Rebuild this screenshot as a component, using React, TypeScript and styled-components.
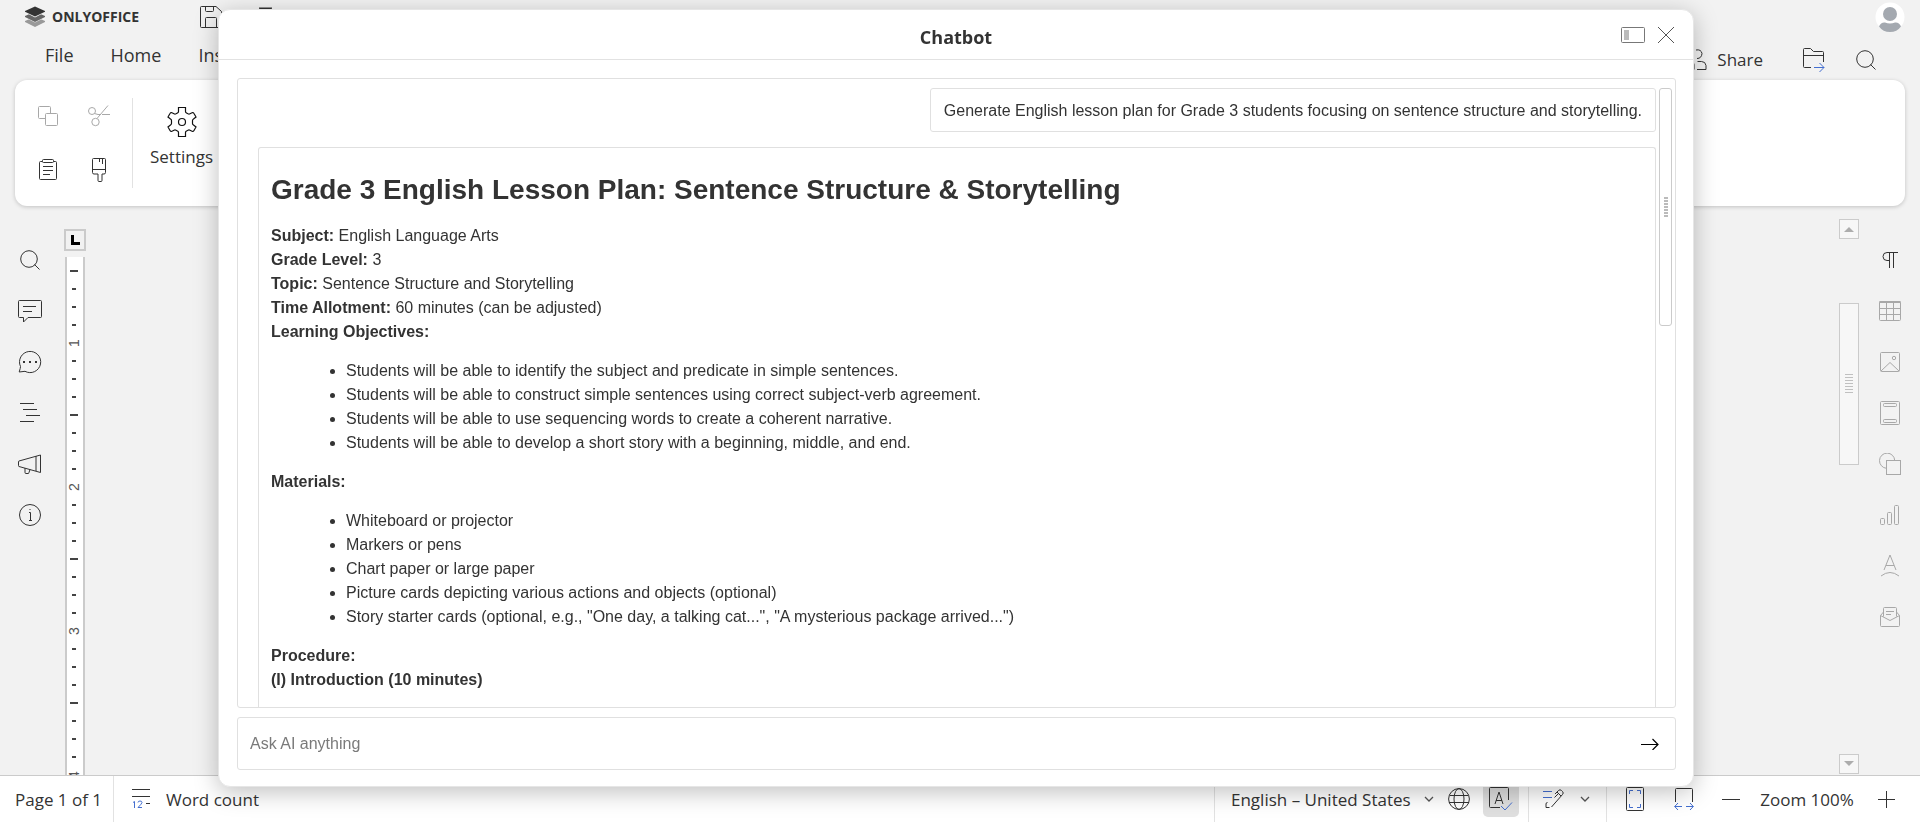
import React from "react";
import styled, { createGlobalStyle } from "styled-components";

const UI_FONT = '"Segoe UI", "Open Sans", "Noto Sans", sans-serif';
const CHAT_FONT = 'Arial, "Liberation Sans", sans-serif';

const GlobalStyle = createGlobalStyle`
  *, *::before, *::after { box-sizing: border-box; }
  body { margin: 0; background: #f2f2f2; color: #333; font-family: ${UI_FONT}; }
  button, input, select { font: inherit; color: inherit; }
  ul { list-style: none; margin: 0; padding: 0; }
`;

const Shell = styled.div`
  display: flex;
  flex-direction: column;
  height: 100vh;
  min-height: 600px;
  overflow: hidden;
  background: #f2f2f2;
`;

const Svg = styled.svg<{ $tone?: string }>`
  display: block;
  flex: none;
  fill: none;
  stroke: ${(p) => p.$tone ?? "#333"};
  stroke-width: 1;
`;

function Icon({ w, h, tone, children }: { w: number; h: number; tone?: string; children: React.ReactNode }) {
  return (
    <Svg width={w} height={h} viewBox={`0 0 ${w} ${h}`} $tone={tone} aria-hidden="true">
      {children}
    </Svg>
  );
}

const IconButton = styled.button<{ $w?: number; $h?: number }>`
  display: flex;
  align-items: center;
  justify-content: center;
  flex: none;
  width: ${(p) => p.$w ?? 30}px;
  height: ${(p) => p.$h ?? 30}px;
  padding: 0;
  border: 0;
  background: transparent;
`;

/* Header */
const Header = styled.header`
  display: flex;
  justify-content: space-between;
  flex: none;
  height: 80px;
`;
const HeaderLeft = styled.div`
  display: flex;
  flex-direction: column;
`;
const TitleRow = styled.div`
  display: flex;
  align-items: center;
  height: 34px;
  padding-left: 25px;
`;
const Brand = styled.span`
  width: 148px;
  margin-left: 7px;
  font-size: 14px;
  font-weight: 700;
  line-height: 20px;
`;
const QuickActions = styled.div`
  display: flex;
  gap: 16px;
`;
const Tabs = styled.nav`
  display: flex;
  gap: 37px;
  padding-left: 45px;
`;
const Tab = styled.button`
  padding: 0;
  border: 0;
  background: transparent;
  font-size: 18px;
  line-height: 42px;
`;
const HeaderRight = styled.div`
  display: flex;
  flex-direction: column;
  align-items: flex-end;
  padding: 2px 15px 0 0;
`;
const HeaderActions = styled.div`
  display: flex;
  align-items: center;
  margin: 13px 8px 0 0;
`;
const ShareButton = styled.button`
  display: flex;
  align-items: center;
  gap: 10px;
  margin-right: 30px;
  padding: 0;
  border: 0;
  background: transparent;
  font-size: 17px;
  line-height: 30px;
`;

/* Ribbon */
const Ribbon = styled.section`
  display: flex;
  flex: none;
  align-items: center;
  height: 126px;
  margin: 0 15px;
  padding-left: 17px;
  border-radius: 12px;
  background: #fff;
  box-shadow: 0 1px 4px rgba(0, 0, 0, 0.2);
`;
const ClipboardGroup = styled.div`
  display: grid;
  grid-template-columns: 32px 32px;
  grid-template-rows: 30px 30px;
  gap: 24px 19px;
`;
const RibbonDivider = styled.div`
  width: 1px;
  height: 90px;
  margin: 0 17px;
  background: #e2e2e2;
`;
const LargeButton = styled.button`
  display: flex;
  flex-direction: column;
  align-items: center;
  gap: 7px;
  padding: 0 0 10px;
  border: 0;
  background: transparent;
  font-size: 17px;
  line-height: 26px;
`;

/* Work area */
const WorkArea = styled.main`
  display: flex;
  flex: 1;
  min-height: 0;
`;
const SideBar = styled.aside<{ $width: number }>`
  display: flex;
  flex: none;
  flex-direction: column;
  align-items: center;
  gap: 21px;
  width: ${(p) => p.$width}px;
  padding-top: 39px;
`;
const RulerColumn = styled.div`
  display: flex;
  flex: none;
  flex-direction: column;
  align-items: center;
  gap: 6px;
  width: 30px;
  padding-top: 23px;
`;
const TabStop = styled.button`
  display: flex;
  align-items: center;
  justify-content: center;
  flex: none;
  width: 22px;
  height: 22px;
  padding: 0;
  border: 2px solid #cbcbcb;
  background: #f2f2f2;
`;
const Ruler = styled.div`
  display: flex;
  flex: 1;
  flex-direction: column;
  align-items: center;
  width: 20px;
  min-height: 0;
  overflow: hidden;
  padding: 5px 2px 0 0;
  border: solid #cbcbcb;
  border-width: 0 2px;
  background: #fff;
`;
const Tick = styled.div<{ $long?: boolean }>`
  display: flex;
  align-items: center;
  flex: none;
  height: 18px;
  &::before {
    content: "";
    width: ${(p) => (p.$long ? 8 : 4)}px;
    height: 2px;
    background: #444;
  }
`;
const TickNumber = styled.span`
  flex: none;
  height: 18px;
  font: 14px/18px ${CHAT_FONT};
  color: #555;
  transform: rotate(-90deg);
`;
const Canvas = styled.div`
  flex: 1;
`;
const PageScroll = styled.div`
  display: flex;
  flex: none;
  flex-direction: column;
  width: 20px;
  padding: 13px 0 1px;
`;
const ScrollButton = styled(IconButton)`
  width: 20px;
  height: 20px;
  border: 1px solid #cbcbcb;
  background: #f7f7f7;
`;
const PageThumb = styled.div`
  display: flex;
  align-items: center;
  justify-content: center;
  height: 162px;
  margin: 64px 0 auto;
  border: 1px solid #cbcbcb;
  background: #f7f7f7;
`;

/* Status bar */
const StatusBar = styled.footer`
  display: flex;
  flex: none;
  align-items: center;
  justify-content: space-between;
  height: 47px;
  border-top: 1px solid #cbcbcb;
  background: #fff;
  font-size: 17px;
`;
const StatusGroup = styled.div`
  display: flex;
  align-items: center;
  height: 100%;
`;
const StatusTools = styled(StatusGroup)`
  padding-right: 12px;
`;
const StatusText = styled.button`
  display: flex;
  align-items: center;
  gap: 15px;
  padding: 0;
  border: 0;
  background: transparent;
  white-space: nowrap;
`;
const PageCount = styled(StatusText)`
  width: 113px;
  padding-left: 15px;
`;
const StatusDivider = styled.div<{ $before?: number }>`
  width: 1px;
  height: 100%;
  margin-left: ${(p) => p.$before ?? 0}px;
  background: #e2e2e2;
`;
const WordCount = styled(StatusText)`
  padding-left: 18px;
`;
const LanguageSelect = styled.select`
  width: 182px;
  margin: 0 3px 0 16px;
  padding: 0;
  border: 0;
  background: transparent;
  appearance: none;
`;
const SpellButton = styled(IconButton)`
  width: 36px;
  height: 36px;
  margin: 0 9px 0 7px;
  border-radius: 5px;
  background: #dfdfdf;
`;
const ZoomLabel = styled.span`
  width: 98px;
  margin: 0 10px 0 1px;
  text-align: center;
  white-space: nowrap;
`;

/* Dialog */
const Overlay = styled.div`
  position: fixed;
  inset: 0;
  display: flex;
  padding: 9px 226px 35px 218px;
`;
const Dialog = styled.section`
  display: flex;
  flex: 1;
  flex-direction: column;
  min-width: 0;
  border: 1px solid #e6e6e6;
  border-radius: 12px;
  background: #fff;
  box-shadow: 0 5px 25px rgba(0, 0, 0, 0.25);
`;
const DialogHeader = styled.header`
  display: grid;
  grid-template-columns: 1fr auto 1fr;
  align-items: center;
  flex: none;
  height: 50px;
  padding: 0 12px;
  border-bottom: 1px solid #e2e2e2;
`;
const DialogTitle = styled.h2`
  grid-column: 2;
  margin: 4px 0 0;
  font-size: 18px;
  font-weight: 700;
  line-height: 26px;
`;
const DialogTools = styled.div`
  display: flex;
  justify-content: flex-end;
  gap: 2px;
`;
const DialogBody = styled.div`
  display: flex;
  flex: 1;
  flex-direction: column;
  gap: 9px;
  min-height: 0;
  padding: 18px 17px 16px 18px;
  font-family: ${CHAT_FONT};
  font-size: 16px;
  line-height: 24px;
`;
const ChatLog = styled.div`
  display: flex;
  flex: 1;
  gap: 3px;
  min-height: 0;
  overflow: hidden;
  padding: 9px 3px 0 20px;
  border: 1px solid #e0e0e0;
  border-radius: 3px;
`;
const Messages = styled.div`
  display: flex;
  flex: 1;
  flex-direction: column;
  gap: 15px;
  min-width: 0;
`;
const UserMessage = styled.p`
  align-self: flex-end;
  margin: 0;
  padding: 10px 13px 8px;
  border: 1px solid #e0e0e0;
  border-radius: 3px;
`;
const BotMessage = styled.article`
  flex: 1 0 auto;
  padding: 25px 12px 0;
  border: 1px solid #e0e0e0;
  border-bottom: 0;
  border-radius: 3px 3px 0 0;
`;
const PlanTitle = styled.h1`
  margin: 0 0 17px;
  font-size: 28px;
  font-weight: 700;
  line-height: 34px;
`;
const Line = styled.p`
  margin: 0;
`;
const Bullets = styled.ul`
  margin: 15px 0;
  padding-left: 75px;
  list-style: disc;
`;
const ChatThumb = styled.div`
  display: flex;
  align-items: center;
  justify-content: center;
  flex: none;
  width: 13px;
  height: 238px;
  border: 1px solid #cbcbcb;
  border-radius: 3px;
`;
const Composer = styled.form`
  display: flex;
  align-items: center;
  flex: none;
  height: 53px;
  padding: 0 10px 0 12px;
  border: 1px solid #e0e0e0;
  border-radius: 3px;
`;
const Prompt = styled.input`
  flex: 1;
  padding: 0;
  border: 0;
  outline: 0;
  background: transparent;
  &::placeholder { color: #7a7a7a; opacity: 1; }
`;

const BLUE = "#446fd0";
const PALE = "#a8a8a8";

const Magnifier = () => (
  <Icon w={20} h={20}>
    <circle cx="9" cy="9" r="8.3" />
    <path d="M14.5 14.5l5 5" />
  </Icon>
);
const Chevron = () => (
  <Icon w={10} h={7} tone="#555"><path d="M1 1l4 4 4-4" strokeWidth="1.3" /></Icon>
);

const objectives = [
  "Students will be able to identify the subject and predicate in simple sentences.",
  "Students will be able to construct simple sentences using correct subject-verb agreement.",
  "Students will be able to use sequencing words to create a coherent narrative.",
  "Students will be able to develop a short story with a beginning, middle, and end.",
];
const materials = [
  "Whiteboard or projector",
  "Markers or pens",
  "Chart paper or large paper",
  "Picture cards depicting various actions and objects (optional)",
  'Story starter cards (optional, e.g., "One day, a talking cat...", "A mysterious package arrived...")',
];
const details: [string, string][] = [
  ["Subject:", "English Language Arts"],
  ["Grade Level:", "3"],
  ["Topic:", "Sentence Structure and Storytelling"],
  ["Time Allotment:", "60 minutes (can be adjusted)"],
];

const leftTools: [string, React.ReactNode][] = [
  ["Search", <Magnifier />],
  ["Comments", (
    <Icon w={24} h={24}>
      <path d="M1.5 1.5h21a1 1 0 0 1 1 1v15a1 1 0 0 1-1 1H10l-4.500 4.500v-4.500h-4a1 1 0 0 1-1-1v-15a1 1 0 0 1 1-1zM5 7.500h13M5 12.500h9" />
    </Icon>
  )],
  ["Chat", (
    <Icon w={24} h={24}>
      <path d="M2.500 16.500A10.600 10.600 0 1 1 7 21.300L1.200 22l1-3.500z" />
      <path d="M5 12h2M11 12h2M17 12h2" strokeWidth="2" />
    </Icon>
  )],
  ["Headings", <Icon w={22} h={20}><path d="M1 .5h14M4 6.500h14M7 12.500h14M1 18.500h14" /></Icon>],
  ["Feedback", (
    <Icon w={24} h={20}>
      <path d="M1 7L22.500 1v17.500L1 12.500q-.5 0-.5-1v-3.500q0-1 .5-1zM18 2v15M7 14v4.500q0 1 1 1h2q1 0 1-1l1-3" />
    </Icon>
  )],
  ["About", (
    <Icon w={24} h={24}>
      <circle cx="12" cy="12" r="10.500" />
      <path d="M11 9.500h1.500v7.500M11 17.500h3M11.500 6.500h1" />
    </Icon>
  )],
];

const rightTools: [string, React.ReactNode][] = [
  ["Paragraph settings", <Icon w={18} h={18}><path d="M17 1.500H6a4 4 0 0 0 0 8h2M8.500 1.500V17M12.500 1.500V17" /></Icon>],
  ["Table settings", (
    <Icon w={22} h={22} tone={PALE}>
      <rect x=".5" y="1.500" width="21" height="19" rx="1" />
      <path d="M.5 2h21" strokeWidth="2" />
      <path d="M1 8.500h20M1 14.500h20M7.500 3v18M14.500 3v18" />
    </Icon>
  )],
  ["Image settings", (
    <Icon w={20} h={20} tone={PALE}>
      <rect x=".5" y=".5" width="19" height="19" rx="1" />
      <circle cx="14" cy="6" r="1.700" />
      <path d="M1 19l9-8.500L19 19" />
    </Icon>
  )],
  ["Header settings", (
    <Icon w={20} h={24} tone={PALE}>
      <rect x=".5" y=".5" width="19" height="23" rx="1" />
      <rect x="3.500" y="2.500" width="13" height="3" rx="1" />
      <rect x="3.500" y="18.500" width="13" height="3" rx="1" />
    </Icon>
  )],
  ["Shape settings", (
    <Icon w={22} h={22} tone={PALE}>
      <path d="M7.500 15.300A7.600 7.600 0 1 1 15.700 7.500" />
      <rect x="7.500" y="7.500" width="14" height="14" />
    </Icon>
  )],
  ["Chart settings", (
    <Icon w={20} h={20} tone={PALE}>
      <rect x=".5" y="13.500" width="4" height="6" rx="1" />
      <rect x="7.500" y="7.500" width="4" height="12" rx="1" />
      <rect x="14.500" y=".5" width="4" height="19" rx="1" />
    </Icon>
  )],
  ["Text art settings", (
    <Icon w={20} h={24} tone={PALE}>
      <path d="M4 16L10 1l6 15M6 11.500h8M1 22q9-7 18 0" />
    </Icon>
  )],
  ["Mail merge settings", (
    <Icon w={20} h={20} tone={PALE}>
      <path d="M3.500 5L.5 8.500v10q0 1 1 1h17q1 0 1-1v-10L16.500 5M.5 8.500L10 13.500l9.500-5M3.500 9.500V1.500q0-1 1-1h11q1 0 1 1v8M6 4.500h8M6 7.500h5" />
    </Icon>
  )],
];

function RulerMarks() {
  return (
    <>
      {[1, 2, 3, 4].map((n) => (
        <React.Fragment key={n}>
          <Tick $long /><Tick /><Tick /><Tick />
          <TickNumber>{n}</TickNumber>
          <Tick /><Tick /><Tick />
        </React.Fragment>
      ))}
    </>
  );
}

function TopBar() {
  return (
    <Header>
      <HeaderLeft>
        <TitleRow>
          <Icon w={20} h={22} tone="none">
            <path d="M0 15l10-4.500L20 15v1l-10 5-10-5z" fill="#999" />
            <path d="M0 10.500L10 6l10 4.500v1L10 16.500 0 11.500z" fill="#f2f2f2" />
            <path d="M0 10l10-4.500L20 10v1L10 16 0 11z" fill="#666" />
            <path d="M0 5.500L10 1l10 4.500v.8L10 11.500 0 6.300z" fill="#f2f2f2" />
            <path d="M0 5L10 .5 20 5v.8L10 10.500 0 5.800z" fill="#333" />
          </Icon>
          <Brand>ONLYOFFICE</Brand>
          <QuickActions>
            <IconButton $w={22} $h={22} aria-label="Save">
              <Icon w={22} h={22}>
                <path d="M1.500.5h14.500l5.500 5v15q0 1-1 1h-19q-1 0-1-1v-19q0-1 1-1zM5.500.5v4q0 1 1 1h6q1 0 1-1v-4M5.500 21.500v-9q0-1 1-1h9q1 0 1 1v9" />
              </Icon>
            </IconButton>
            <IconButton $w={54} $h={22} aria-label="Print">
              <Icon w={22} h={22}><path d="M5.500 7V2.500h12V7M5 2h13M1.500 7.500h19v9h-19z" /></Icon>
            </IconButton>
          </QuickActions>
        </TitleRow>
        <Tabs>
          <Tab>File</Tab>
          <Tab>Home</Tab>
          <Tab>Insert</Tab>
        </Tabs>
      </HeaderLeft>
      <HeaderRight>
        <IconButton aria-label="Account">
          <Icon w={30} h={30} tone="none">
            <circle cx="15" cy="15" r="14.500" fill="#fff" />
            <circle cx="15" cy="12" r="7" fill="#a4a9b0" />
            <path d="M4 24.500q2-4.500 6-4 5 2 10 0 4-.5 6 4-4 5.500-11 5.500t-11-5.500z" fill="#a4a9b0" />
          </Icon>
        </IconButton>
        <HeaderActions>
          <ShareButton>
            <Icon w={24} h={22}>
              <circle cx="6" cy="5" r="4.500" />
              <path d="M13 1q5-1 6 3.500-.5 5-5 5M1 20.500v-5q0-3 3-3h4q3 0 3 3v5zM14.500 12.500h4q4 0 4.500 4v4h-9" />
            </Icon>
            Share
          </ShareButton>
          <IconButton $w={42} aria-label="Open file location">
            <Icon w={22} h={24}>
              <path d="M8 19.500H1.500q-1 0-1-1v-17q0-1 1-1h6l3 3h9q1 0 1 1V14M.5 7.500h20" />
              <path d="M11 19.500h10M16.500 15l4.500 4.500-4.500 4.500" stroke={BLUE} />
            </Icon>
          </IconButton>
          <IconButton $w={62} aria-label="Find"><Magnifier /></IconButton>
        </HeaderActions>
      </HeaderRight>
    </Header>
  );
}

function Toolbar() {
  return (
    <Ribbon>
      <ClipboardGroup>
        <IconButton $w={32} aria-label="Copy">
          <Icon w={20} h={20} tone={PALE}>
            <path d="M7 12.500H1.500q-1 0-1-1v-10q0-1 1-1h10q1 0 1 1V7" />
            <rect x="7.500" y="7.500" width="12" height="12" rx="1" />
          </Icon>
        </IconButton>
        <IconButton $w={32} aria-label="Cut">
          <Icon w={22} h={22} tone={PALE}>
            <circle cx="4" cy="6" r="3.500" />
            <circle cx="7.500" cy="17" r="3.700" />
            <path d="M6.500 8.500l3.500 1h3M14 9.500h8M20 .5L9 13.500" />
          </Icon>
        </IconButton>
        <IconButton $w={32} aria-label="Paste">
          <Icon w={18} h={22}>
            <path d="M3.500 2.500h-2q-1 0-1 1v16q0 1 1 1h15q1 0 1-1v-16q0-1-1-1h-2M4 7.500h10M4 11.500h10M4 15.500h7" />
            <rect x="3.500" y=".5" width="11" height="3" rx="1" />
          </Icon>
        </IconButton>
        <IconButton $w={32} aria-label="Copy style">
          <Icon w={14} h={24}>
            <path d="M.5 1.500q0-1 1-1h11q1 0 1 1v13q0 1.500-1.500 1.500h-2v6.500q0 1-1 1h-2q-1 0-1-1v-6.500H2Q.5 16 .5 14.500zM.5 11.500h13M7.500.5V4M10.500.5V6" />
          </Icon>
        </IconButton>
      </ClipboardGroup>
      <RibbonDivider />
      <LargeButton>
        <Icon w={30} h={30} tone="#111">
          <path d="M11.500.5h7v4q0 1 1 1.500l1.500.8q1 .5 2 0l2.500-1.300q1 0 1.500 1l2 3.500-2.500 2q-1 .6-1 1.500v3q0 1 1 1.500l2.500 2-2 3.500q-.5 1-1.500 1L23 23.200q-1-.5-2 0l-1.500.8q-1 .5-1 1.500v4h-7v-4q0-1-1-1.500L9 23.200q-1-.5-2 0l-2.500 1.300q-1 0-1.500-1L1 20l2.500-2q1-.6 1-1.500v-3q0-1-1-1.500L1 10l2-3.500q.5-1 1.500-1L7 6.800q1 .5 2 0l1.500-.8q1-.5 1-1.500z" strokeWidth="1.200" />
          <circle cx="15" cy="15" r="3.500" strokeWidth="1.200" />
        </Icon>
        Settings
      </LargeButton>
    </Ribbon>
  );
}

function Status() {
  return (
    <StatusBar>
      <StatusGroup>
        <PageCount>Page 1 of 1</PageCount>
        <StatusDivider />
        <WordCount>
          <Icon w={19} h={20}>
            <path d="M0 .5h18M0 7.500h18M14 14.500h4" />
            <path d="M1 13.500l1.500-1V19M6 13.500q0-1.500 2-1.500t2 1.500q0 1-4 5h4" stroke={BLUE} />
          </Icon>
          Word count
        </WordCount>
      </StatusGroup>
      <StatusTools>
        <StatusDivider />
        <LanguageSelect aria-label="Document language">
          <option>English – United States</option>
        </LanguageSelect>
        <IconButton $w={26} aria-label="Show languages"><Chevron /></IconButton>
        <IconButton $w={34} aria-label="Set document language">
          <Icon w={22} h={22}>
            <circle cx="11" cy="11" r="10.400" />
            <ellipse cx="11" cy="11" rx="5" ry="10.400" />
            <path d="M2 7.500h18M1 14.500h20" />
          </Icon>
        </IconButton>
        <SpellButton aria-label="Spell checking" aria-pressed="true">
          <Icon w={24} h={24}>
            <path d="M11 20.500H1.500q-1 0-1-1v-18q0-1 1-1h17q1 0 1 1V13M6 17l4-12 4 12M7 13.500h6" />
            <path d="M12 19l4 4 7-7.500" stroke={BLUE} />
          </Icon>
        </SpellButton>
        <StatusDivider />
        <IconButton $w={50} aria-label="Track changes">
          <Icon w={22} h={20}>
            <path d="M0 2.500h9M0 8.500h9" stroke={BLUE} />
            <path d="M6.500 18.500H3v-3.500q0-1.500 1.500-1.500M12 5L15.500 1.500q1.500-1.500 3 0l1 1q1.500 1.500 0 3L8.500 18M14 3l4 4M11.500 8.500L16 4" />
          </Icon>
        </IconButton>
        <IconButton $w={12} aria-label="Track changes options"><Chevron /></IconButton>
        <StatusDivider $before={15} />
        <IconButton $w={55} aria-label="Fit to page">
          <Icon w={18} h={24}>
            <rect x=".5" y=".5" width="17" height="23" rx="1" />
            <path d="M3.500 7V3.500H7M11 3.500h3.500V7M3.500 17v3.500H7M11 20.500h3.500V17" stroke={BLUE} />
          </Icon>
        </IconButton>
        <IconButton $w={43} aria-label="Fit to width">
          <Icon w={20} h={22}>
            <path d="M1.500 14V1.500q0-1 1-1h15q1 0 1 1V14" />
            <path d="M8 18.500H.7M4 15L.7 18.500 4 22M12 18.500h7.300M16 15l3.300 3.500L16 22" stroke={BLUE} />
          </Icon>
        </IconButton>
        <IconButton $w={52} aria-label="Zoom out"><Icon w={18} h={18}><path d="M0 9.500h18" /></Icon></IconButton>
        <ZoomLabel>Zoom 100%</ZoomLabel>
        <IconButton $w={42} aria-label="Zoom in"><Icon w={18} h={18}><path d="M0 9.500h17M8.500 1v17" /></Icon></IconButton>
      </StatusTools>
    </StatusBar>
  );
}

function Chatbot() {
  return (
    <Overlay>
      <Dialog role="dialog" aria-labelledby="chatbot-title">
        <DialogHeader>
          <DialogTitle id="chatbot-title">Chatbot</DialogTitle>
          <DialogTools>
            <IconButton $w={32} aria-label="Dock panel">
              <Icon w={24} h={16} tone="#777">
                <rect x=".5" y=".5" width="23" height="15" rx="1" />
                <path d="M3 3h5v10H3z" fill="#bbb" stroke="none" />
              </Icon>
            </IconButton>
            <IconButton aria-label="Close">
              <Icon w={16} h={16} tone="#555"><path d="M0 0l16 16M16 0L0 16" /></Icon>
            </IconButton>
          </DialogTools>
        </DialogHeader>
        <DialogBody>
          <ChatLog>
            <Messages>
              <UserMessage>
                Generate English lesson plan for Grade 3 students focusing on sentence structure and storytelling.
              </UserMessage>
              <BotMessage>
                <PlanTitle>Grade 3 English Lesson Plan: Sentence Structure &amp; Storytelling</PlanTitle>
                {details.map(([label, value]) => (
                  <Line key={label}><strong>{label}</strong> {value}</Line>
                ))}
                <Line><strong>Learning Objectives:</strong></Line>
                <Bullets>{objectives.map((t) => <li key={t}>{t}</li>)}</Bullets>
                <Line><strong>Materials:</strong></Line>
                <Bullets>{materials.map((t) => <li key={t}>{t}</li>)}</Bullets>
                <Line><strong>Procedure:</strong></Line>
                <Line><strong>(I) Introduction (10 minutes)</strong></Line>
              </BotMessage>
            </Messages>
            <ChatThumb>
              <Icon w={4} h={20} tone="#bbb">
                <path d="M2 0v20" strokeWidth="4" strokeDasharray="2 1" />
              </Icon>
            </ChatThumb>
          </ChatLog>
          <Composer onSubmit={(e) => e.preventDefault()}>
            <Prompt aria-label="Ask AI anything" placeholder="Ask AI anything" />
            <IconButton aria-label="Send">
              <Icon w={18} h={12} tone="#000"><path d="M0 6.500h17M11.500 1L17 6.500l-5.500 5.500" strokeWidth="1.200" /></Icon>
            </IconButton>
          </Composer>
        </DialogBody>
      </Dialog>
    </Overlay>
  );
}

export default function App() {
  return (
    <>
      <GlobalStyle />
      <Shell>
        <TopBar />
        <Toolbar />
        <WorkArea>
          <SideBar $width={60}>
            {leftTools.map(([label, icon]) => (
              <IconButton key={label} aria-label={label}>{icon}</IconButton>
            ))}
          </SideBar>
          <RulerColumn>
            <TabStop aria-label="Tab stop">
              <Icon w={9} h={10} tone="#000"><path d="M1.500 0v8.500H9" strokeWidth="3" /></Icon>
            </TabStop>
            <Ruler><RulerMarks /></Ruler>
          </RulerColumn>
          <Canvas />
          <PageScroll>
            <ScrollButton aria-label="Scroll up">
              <Icon w={10} h={6} tone="none"><path d="M0 6l5-5 5 5z" fill="#adadad" /></Icon>
            </ScrollButton>
            <PageThumb>
              <Icon w={8} h={20} tone="#c0c0c0">
                <path d="M0 .5h8M0 3.500h8M0 6.500h8M0 9.500h8M0 12.500h8M0 15.500h8M0 18.500h8" />
              </Icon>
            </PageThumb>
            <ScrollButton aria-label="Scroll down">
              <Icon w={10} h={6} tone="none"><path d="M0 0l5 5 5-5z" fill="#adadad" /></Icon>
            </ScrollButton>
          </PageScroll>
          <SideBar $width={61}>
            {rightTools.map(([label, icon]) => (
              <IconButton key={label} aria-label={label}>{icon}</IconButton>
            ))}
          </SideBar>
        </WorkArea>
        <Status />
      </Shell>
      <Chatbot />
    </>
  );
}
